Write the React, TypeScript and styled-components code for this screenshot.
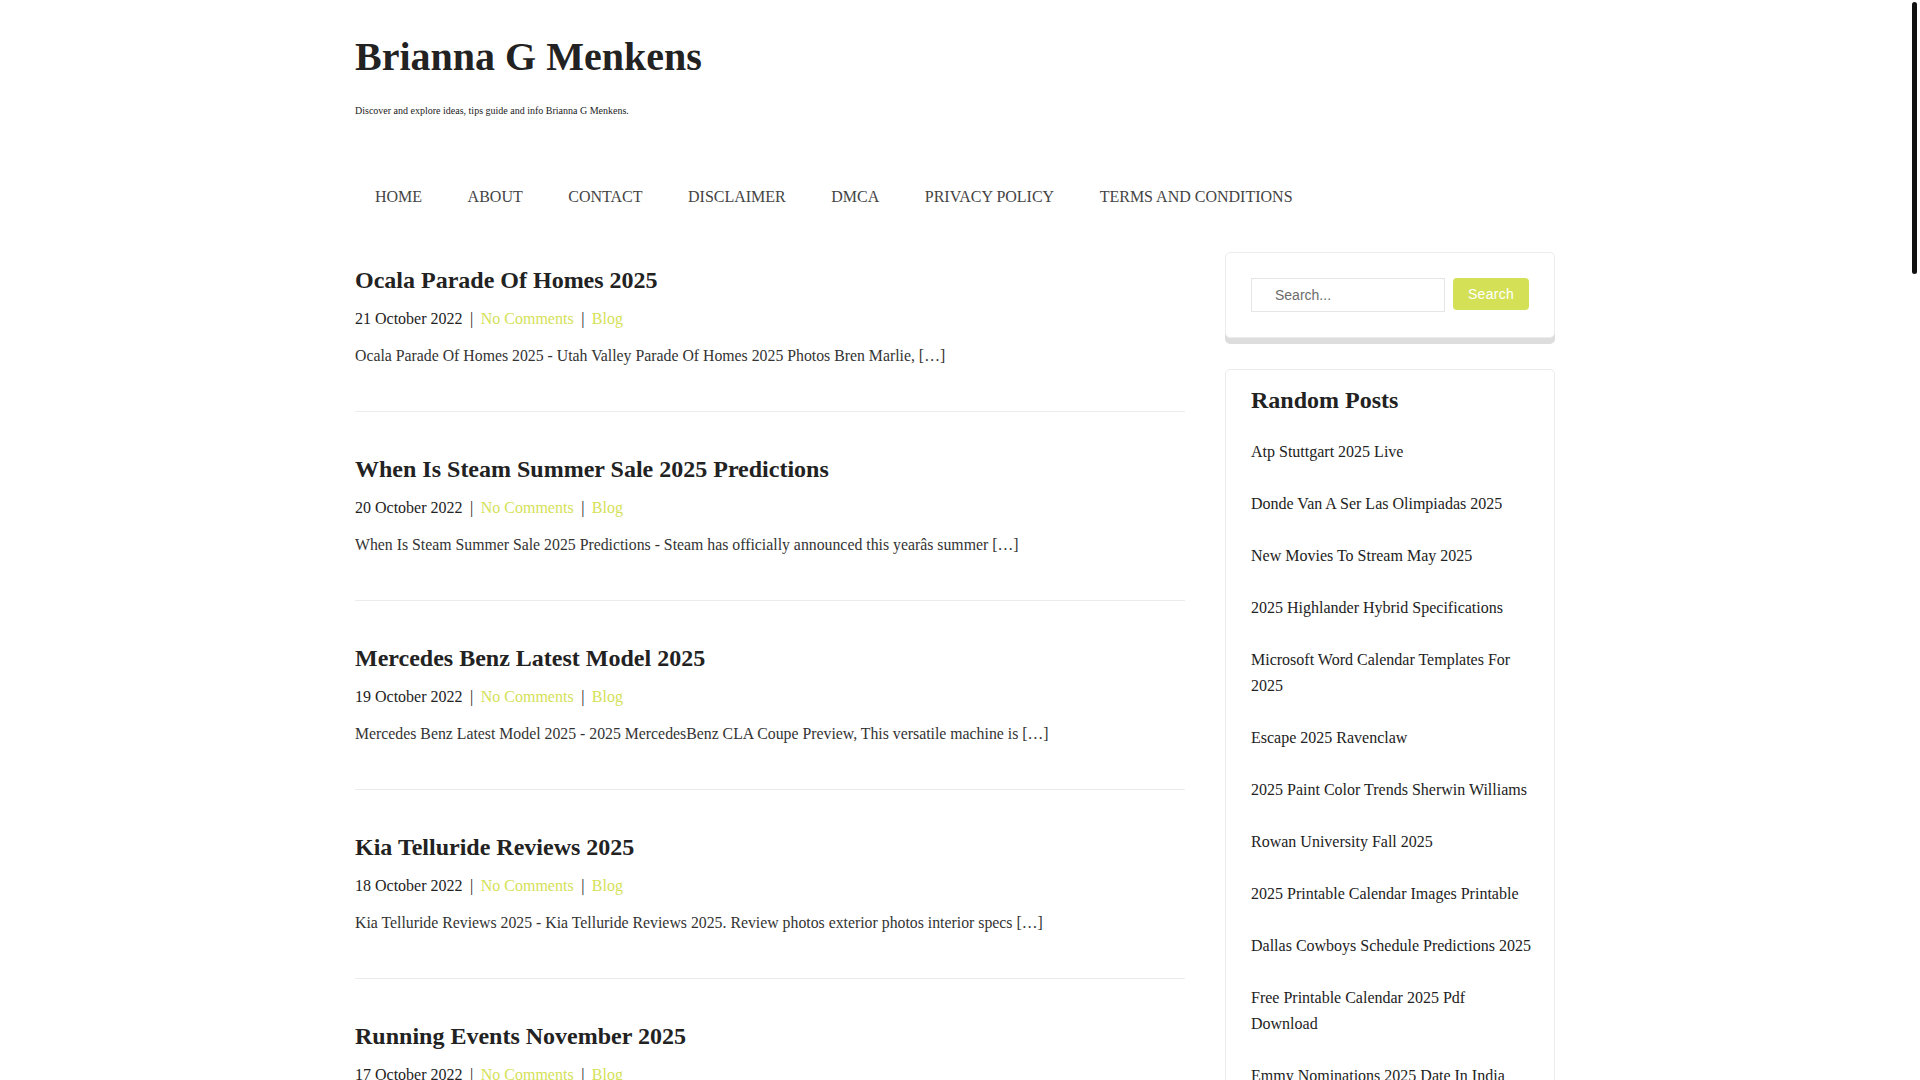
import React from 'react'
import styled, { createGlobalStyle } from 'styled-components'

const COLORS = {
  text: '#333333',
  heading: '#222222',
  lime: '#d4e157',
  border: '#ececec',
  shadow: '#dddddd',
}

const GlobalStyle = createGlobalStyle`
  html, body {
    margin: 0;
    padding: 0;
    background: #ffffff;
  }

  body {
    font-family: 'Liberation Serif', 'Times New Roman', serif;
    color: ${COLORS.text};
  }
`

const NAV = ['Home', 'About', 'Contact', 'Disclaimer', 'DMCA', 'Privacy Policy', 'Terms and Conditions']

const POSTS = [
  { title: 'Ocala Parade Of Homes 2025', date: '21 October 2022', excerpt: 'Ocala Parade Of Homes 2025 - Utah Valley Parade Of Homes 2025 Photos Bren Marlie, […]' },
  { title: 'When Is Steam Summer Sale 2025 Predictions', date: '20 October 2022', excerpt: 'When Is Steam Summer Sale 2025 Predictions - Steam has officially announced this yearâs summer […]' },
  { title: 'Mercedes Benz Latest Model 2025', date: '19 October 2022', excerpt: 'Mercedes Benz Latest Model 2025 - 2025 MercedesBenz CLA Coupe Preview, This versatile machine is […]' },
  { title: 'Kia Telluride Reviews 2025', date: '18 October 2022', excerpt: 'Kia Telluride Reviews 2025 - Kia Telluride Reviews 2025. Review photos exterior photos interior specs […]' },
  { title: 'Running Events November 2025', date: '17 October 2022', excerpt: 'Running Events November 2025 - Upcoming races near you, marathon and half marathon calendar […]' },
  { title: 'Best Family Cars 2025 Uk', date: '16 October 2022', excerpt: 'Best Family Cars 2025 Uk - The best family cars you can buy right now, tested and rated […]' },
  { title: 'Nfl Draft 2025 Mock Draft', date: '15 October 2022', excerpt: 'Nfl Draft 2025 Mock Draft - Our latest first round projections for every team […]' },
  { title: 'Toyota Camry 2025 Hybrid Price', date: '14 October 2022', excerpt: 'Toyota Camry 2025 Hybrid Price - 2025 Toyota Camry Hybrid pricing, trims and features […]' },
  { title: 'Chinese New Year 2025 Animal', date: '13 October 2022', excerpt: 'Chinese New Year 2025 Animal - The Year of the Snake begins on January 29 […]' },
  { title: 'Spring Break 2025 Dates Texas', date: '12 October 2022', excerpt: 'Spring Break 2025 Dates Texas - School district calendars for the coming spring […]' },
  { title: 'Honda Pilot 2025 Redesign', date: '11 October 2022', excerpt: 'Honda Pilot 2025 Redesign - What we know about the next generation Pilot SUV […]' },
  { title: 'Easter Sunday 2025 Date', date: '10 October 2022', excerpt: 'Easter Sunday 2025 Date - Easter falls on April 20 this year, here is why […]' },
  { title: 'Summer Olympics 2025 Schedule', date: '9 October 2022', excerpt: 'Summer Olympics 2025 Schedule - Full event schedule and how to watch live […]' },
  { title: 'Federal Holidays 2025 Calendar', date: '8 October 2022', excerpt: 'Federal Holidays 2025 Calendar - A printable list of every federal holiday […]' },
  { title: 'Ford Bronco 2025 Colors', date: '7 October 2022', excerpt: 'Ford Bronco 2025 Colors - Explore every exterior paint option available […]' },
  { title: 'Super Bowl 2025 Halftime Show', date: '6 October 2022', excerpt: 'Super Bowl 2025 Halftime Show - Performer announcement and what to expect […]' },
  { title: 'Tax Brackets 2025 Married Filing Jointly', date: '5 October 2022', excerpt: 'Tax Brackets 2025 Married Filing Jointly - New income thresholds and rates […]' },
  { title: 'Disney World Crowd Calendar 2025', date: '4 October 2022', excerpt: 'Disney World Crowd Calendar 2025 - Best and worst days to visit the parks […]' },
  { title: 'Jeep Wrangler 2025 Changes', date: '3 October 2022', excerpt: 'Jeep Wrangler 2025 Changes - Updated interior, new trims and engine options […]' },
  { title: 'Coachella 2025 Lineup Rumors', date: '2 October 2022', excerpt: 'Coachella 2025 Lineup Rumors - Every artist rumored to play the festival […]' },
]

const RANDOM_POSTS = [
  'Atp Stuttgart 2025 Live',
  'Donde Van A Ser Las Olimpiadas 2025',
  'New Movies To Stream May 2025',
  '2025 Highlander Hybrid Specifications',
  'Microsoft Word Calendar Templates For 2025',
  'Escape 2025 Ravenclaw',
  '2025 Paint Color Trends Sherwin Williams',
  'Rowan University Fall 2025',
  '2025 Printable Calendar Images Printable',
  'Dallas Cowboys Schedule Predictions 2025',
  'Free Printable Calendar 2025 Pdf Download',
  'Emmy Nominations 2025 Date In India',
  'Chevy Silverado 2025 Release Date',
  'Best Time To Visit Japan 2025',
]

const Viewport = styled.div`
  padding-right: 10px;
`

const ScrollThumb = styled.div`
  position: fixed;
  top: 2px;
  right: 3px;
  width: 5px;
  height: 272px;
  border-radius: 3px;
  background: #111111;
`

const Page = styled.div`
  width: 1200px;
  margin: 0 auto;
  padding-bottom: 80px;
`

const Header = styled.header`
  padding-top: 33px;
`

const SiteTitle = styled.h1`
  margin: 0;
  font-size: 40px;
  line-height: 48px;
  font-weight: 700;
  color: ${COLORS.heading};
`

const Tagline = styled.p`
  margin: 22px 0 0;
  font-size: 10px;
  line-height: 15px;
  color: ${COLORS.heading};
`

const Nav = styled.nav`
  display: flex;
  gap: 5.5px;
  margin-top: 67px;
`

const NavLink = styled.a`
  padding: 0 20px;
  font-size: 16px;
  line-height: 24px;
  text-transform: uppercase;
  color: #444444;
  text-decoration: none;
`

const Content = styled.div`
  display: grid;
  grid-template-columns: 830px 330px;
  gap: 40px;
  margin-top: 43px;
  align-items: start;
`

const PostList = styled.main`
  padding-top: 13px;
`

const Article = styled.article`
  padding-bottom: 43px;
  margin-bottom: 42px;
  border-bottom: 1px solid ${COLORS.border};
`

const PostTitle = styled.h2`
  margin: 0 0 11px;
  font-size: 24px;
  line-height: 31px;
  font-weight: 700;
  color: ${COLORS.heading};
`

const Meta = styled.div`
  display: flex;
  align-items: center;
  font-size: 16px;
  line-height: 24px;
  color: ${COLORS.heading};
  margin-bottom: 13px;
`

const Divider = styled.span`
  margin: 0 7.5px;
`

const MetaLink = styled.a`
  color: ${COLORS.lime};
  text-decoration: none;
`

const Excerpt = styled.p`
  margin: 0;
  font-size: 15.8px;
  line-height: 24px;
  color: ${COLORS.text};
`

const Sidebar = styled.aside`
  display: flex;
  flex-direction: column;
  gap: 31px;
`

const Widget = styled.section<{ $raised?: boolean }>`
  border: 1px solid ${COLORS.border};
  border-radius: 5px;
  background: #ffffff;
  padding: ${(p) => (p.$raised ? '25px' : '16px 21px 20px 25px')};
  box-shadow: ${(p) => (p.$raised ? `0 6px 0 ${COLORS.shadow}` : 'none')};
`

const SearchForm = styled.form`
  display: flex;
  gap: 8px;
  align-items: flex-start;
`

const SearchInput = styled.input`
  box-sizing: border-box;
  width: 194px;
  height: 34px;
  padding: 0 23px;
  border: 1px solid #e6e6e6;
  font-family: 'Liberation Sans', Arial, sans-serif;
  font-size: 14px;
  color: #555555;
  outline: none;

  &::placeholder {
    color: #6b6b6b;
  }
`

const SearchButton = styled.button`
  box-sizing: border-box;
  width: 76px;
  height: 32px;
  border: none;
  border-radius: 4px;
  background: ${COLORS.lime};
  color: #ffffff;
  font-family: 'Liberation Sans', Arial, sans-serif;
  font-size: 14px;
  letter-spacing: 0.3px;
  cursor: pointer;
`

const WidgetTitle = styled.h3`
  margin: 0 0 11px;
  font-size: 24px;
  line-height: 29px;
  font-weight: 700;
  color: ${COLORS.heading};
`

const RandomList = styled.ul`
  list-style: none;
  margin: 0;
  padding: 0;
`

const RandomItem = styled.li`
  padding: 13px 0;
  font-size: 16px;
  line-height: 26px;

  a {
    color: ${COLORS.heading};
    text-decoration: none;
  }
`

export default function App() {
  return (
    <>
      <GlobalStyle />
      <Viewport>
        <Page>
          <Header>
            <SiteTitle>Brianna G Menkens</SiteTitle>
            <Tagline>Discover and explore ideas, tips guide and info Brianna G Menkens.</Tagline>
            <Nav>
              {NAV.map((item) => (
                <NavLink key={item} href="#">{item}</NavLink>
              ))}
            </Nav>
          </Header>

          <Content>
            <PostList>
              {POSTS.map((post) => (
                <Article key={post.title}>
                  <PostTitle>{post.title}</PostTitle>
                  <Meta>
                    <span>{post.date}</span>
                    <Divider>|</Divider>
                    <MetaLink href="#">No Comments</MetaLink>
                    <Divider>|</Divider>
                    <MetaLink href="#">Blog</MetaLink>
                  </Meta>
                  <Excerpt>{post.excerpt}</Excerpt>
                </Article>
              ))}
            </PostList>

            <Sidebar>
              <Widget $raised>
                <SearchForm onSubmit={(e) => e.preventDefault()}>
                  <SearchInput type="search" placeholder="Search..." />
                  <SearchButton type="submit">Search</SearchButton>
                </SearchForm>
              </Widget>

              <Widget>
                <WidgetTitle>Random Posts</WidgetTitle>
                <RandomList>
                  {RANDOM_POSTS.map((title) => (
                    <RandomItem key={title}>
                      <a href="#">{title}</a>
                    </RandomItem>
                  ))}
                </RandomList>
              </Widget>
            </Sidebar>
          </Content>
        </Page>
        <ScrollThumb />
      </Viewport>
    </>
  )
}
